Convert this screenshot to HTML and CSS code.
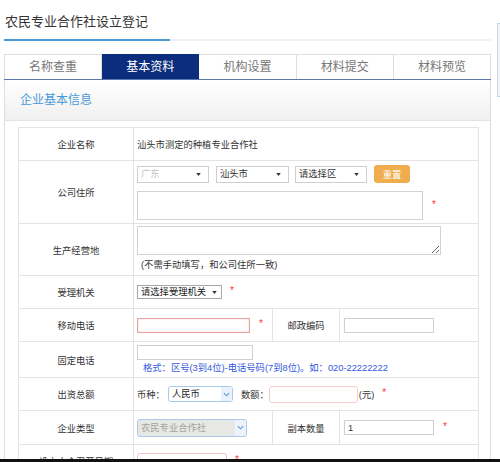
FILE: index.html
```html
<!DOCTYPE html>
<html lang="zh-CN">
<head>
<meta charset="utf-8">
<title>农民专业合作社设立登记</title>
<link rel="stylesheet" href="styles.css">
</head>
<body>
<div class="page">
  <div class="title"><span class="title-text">农民专业合作社设立登记</span></div>
  <ul class="tabs">
    <li class="tab">名称查重</li>
    <li class="tab active">基本资料</li>
    <li class="tab">机构设置</li>
    <li class="tab">材料提交</li>
    <li class="tab">材料预览</li>
  </ul>
  <div class="panel">
    <div class="panel-head">企业基本信息</div>
    <div class="panel-body">
      <table class="form">
        <colgroup><col class="c1"><col class="c2"><col class="c3"><col class="c4"></colgroup>
        <tr class="r1">
          <th>企业名称</th>
          <td colspan="3">汕头市测定的种植专业合作社</td>
        </tr>
        <tr class="r2">
          <th>公司住所</th>
          <td colspan="3">
            <div class="addr">
              <div class="line">
                <span class="sel w72 muted"><select disabled><option>广东</option></select><svg class="tri" viewBox="0 0 6 4"><path d="M0 0h6L3 4z"/></svg></span>
                <span class="sel w73 ml7"><select><option>汕头市</option></select><svg class="tri" viewBox="0 0 6 4"><path d="M0 0h6L3 4z"/></svg></span>
                <span class="sel w72 ml6"><select><option>请选择区</option></select><svg class="tri" viewBox="0 0 6 4"><path d="M0 0h6L3 4z"/></svg></span>
                <button class="btn-reset" type="button">重置</button>
              </div>
              <div class="line">
                <textarea class="ta ta-addr"></textarea>
                <span class="star ml9">*</span>
              </div>
            </div>
          </td>
        </tr>
        <tr class="r3">
          <th>生产经营地</th>
          <td colspan="3">
            <div class="prod">
              <textarea class="ta ta-prod"></textarea>
              <span class="hint">(不需手动填写，和公司住所一致)</span>
            </div>
          </td>
        </tr>
        <tr class="r4">
          <th>受理机关</th>
          <td colspan="3">
            <div class="line">
              <span class="sel sel-org"><select><option>请选择受理机关</option></select><svg class="tri" viewBox="0 0 6 4"><path d="M0 0h6L3 4z"/></svg></span>
              <span class="star ml8">*</span>
            </div>
          </td>
        </tr>
        <tr class="r5">
          <th>移动电话</th>
          <td>
            <div class="line">
              <input class="inp inp-phone req" type="text">
              <span class="star ml9">*</span>
            </div>
          </td>
          <th>邮政编码</th>
          <td class="pl4"><input class="inp inp-zip" type="text"></td>
        </tr>
        <tr class="r6">
          <th>固定电话</th>
          <td colspan="3">
            <div class="tel">
              <input class="inp inp-tel" type="text">
              <span class="fmt">格式：区号(3到4位)-电话号码(7到8位)。如：020-22222222</span>
            </div>
          </td>
        </tr>
        <tr class="r7">
          <th>出资总额</th>
          <td colspan="3">
            <div class="line">
              <span>币种：</span>
              <span class="combo w65 ml3"><select><option>人民币</option></select><span class="chev"><svg viewBox="0 0 8 5"><path d="M1 1l3 3 3-3"/></svg></span></span>
              <span class="ml8">数额：</span>
              <input class="inp inp-amt ml3" type="text">
              <span class="unit">(元)</span>
              <span class="star ml8">*</span>
            </div>
          </td>
        </tr>
        <tr class="r8">
          <th>企业类型</th>
          <td>
            <span class="combo combo-gray w110"><select disabled><option>农民专业合作社</option></select><span class="chev"><svg viewBox="0 0 8 5"><path d="M1 1l3 3 3-3"/></svg></span></span>
          </td>
          <th>副本数量</th>
          <td class="pl4">
            <div class="line">
              <input class="inp inp-zip" type="text" value="1">
              <span class="star ml9">*</span>
            </div>
          </td>
        </tr>
        <tr class="r9">
          <th>设立大会召开日期</th>
          <td colspan="3">
            <div class="line">
              <input class="inp inp-date" type="text">
              <span class="star ml8">*</span>
            </div>
          </td>
        </tr>
      </table>
    </div>
  </div>
</div>
<div class="side-thumb"></div>
<div class="bottom-bar"></div>
</body>
</html>
```

FILE: styles.css
```css
html, body {
  margin: 0;
  padding: 0;
  overflow: hidden;
  background: #fff;
}
body {
  font-family: "Liberation Sans", "Noto Sans CJK SC", sans-serif;
  color: #333;
}
.page {
  margin-left: 4px;
  width: 487px;
}
.title {
  display: flex;
  border-bottom: 2px solid #eef3f9;
}
.title-text {
  display: block;
  width: 165px;
  height: 34px;
  padding: 5px 0 0 1px;
  line-height: 34px;
  font-size: 13px;
  color: #333;
  border-bottom: 2px solid #4b9ad9;
  margin-bottom: -2px;
  white-space: nowrap;
}
.tabs {
  list-style: none;
  margin: 13px 0 0;
  padding: 0;
  display: flex;
  border-bottom: 1px solid #5a78ad;
}
.tab {
  flex: 1;
  height: 25px;
  box-sizing: border-box;
  border-top: 1px solid #dedede;
  border-right: 1px solid #dedede;
  text-align: center;
  line-height: 24px;
  font-size: 12px;
  color: #777;
}
.tab:first-child {
  border-left: 1px solid #dedede;
}
.tab.active {
  background: #0b2d7b;
  border-color: #0b2d7b;
  color: #fff;
}
.panel {
  border: 1px solid #dedede;
  border-top: none;
}
.panel-head {
  height: 40px;
  line-height: 40px;
  padding-left: 15px;
  font-size: 12px;
  color: #4a9ad8;
  background: linear-gradient(#ffffff, #f0f0f0);
  border-bottom: 1px solid #e3e3e3;
}
.panel-body {
  padding: 6px 12px 20px 13px;
}
.form {
  border-collapse: collapse;
  table-layout: fixed;
  width: 460px;
  border: 1px solid #dcdcdc;
  font-size: 9.3px;
}
.c1 { width: 115px; }
.c2 { width: 139px; }
.c3 { width: 67px; }
.c4 { width: 139px; }
.form th,
.form td {
  border: 1px solid #e4e4e4;
  padding: 0;
}
.form th {
  font-weight: normal;
  text-align: center;
  color: #333;
}
.form td {
  padding-left: 3px;
  text-align: left;
}
.form td.pl4 { padding-left: 4px; }
.r1 > * { height: 32px; }
.r2 > * { height: 62px; }
.r3 > * { height: 51px; }
.r4 > * { height: 32px; }
.r5 > * { height: 32px; }
.r6 > * { height: 35px; }
.r7 > * { height: 32px; }
.r8 > * { height: 33px; }
.r9 > * { height: 32px; }

.line {
  display: flex;
  align-items: center;
}
.addr {
  display: flex;
  flex-direction: column;
  gap: 8px;
  padding: 4px 0 3px;
}
.ml3 { margin-left: 3px; }
.ml6 { margin-left: 6px; }
.ml7 { margin-left: 7px; }
.ml8 { margin-left: 8px; }
.ml9 { margin-left: 9px; }

.sel {
  display: inline-flex;
  align-items: center;
  box-sizing: border-box;
  height: 17px;
  border: 1px solid #cfcfcf;
  background: #fff;
}
.sel select {
  appearance: none;
  -webkit-appearance: none;
  border: 0;
  outline: none;
  background: transparent;
  font: inherit;
  color: #333;
  flex: 1;
  min-width: 0;
  height: 100%;
  padding: 0 0 0 3px;
  margin: 0;
}
.sel.muted select { color: #aaa; }
.tri {
  flex: none;
  width: 5px;
  height: 3px;
  margin-right: 7px;
  fill: #333;
}
.w72 { width: 72px; }
.w73 { width: 73px; }
.w65 { width: 65px; }
.w110 { width: 110px; }
.sel-org {
  width: 85px;
  height: 14px;
  border-color: #a8a8a8;
}
.sel-org select { padding-left: 3px; color: #222; }
.sel-org .tri { margin-right: 4px; }

.btn-reset {
  margin-left: 7px;
  width: 36px;
  height: 18px;
  border: 0;
  border-radius: 3px;
  background: #f0ad4e;
  color: #fff;
  font: inherit;
  font-size: 9.3px;
  padding: 0;
}
.ta {
  box-sizing: border-box;
  border: 1px solid #d2d2d2;
  margin: 0;
  padding: 2px;
  font: inherit;
  display: block;
}
.ta-addr {
  width: 286px;
  height: 29px;
  resize: none;
}
.ta-prod {
  width: 304px;
  height: 29px;
}
.prod {
  display: flex;
  flex-direction: column;
  align-items: flex-start;
  gap: 4px;
  padding-bottom: 3px;
}
.hint {
  padding-left: 4px;
  color: #333;
  line-height: 12px;
}
.star {
  color: #f33;
  font-size: 10px;
  line-height: 10px;
  position: relative;
  top: -1px;
}
.inp {
  box-sizing: border-box;
  height: 15px;
  border: 1px solid #cfcfcf;
  margin: 0;
  padding: 0 3px;
  font: inherit;
  color: #333;
  outline: none;
  background: #fff;
}
.inp.req {
  border-color: #e4a2a2;
  box-shadow: inset 0 0 2px #f4c8c8;
}
.inp-phone { width: 113px; }
.inp-zip { width: 90px; height: 15px; }
.inp-tel { width: 116px; }
.tel {
  display: flex;
  flex-direction: column;
  align-items: flex-start;
  gap: 2px;
}
.fmt {
  padding-left: 6px;
  color: #3458e0;
  line-height: 12px;
  white-space: nowrap;
}
.combo {
  display: inline-flex;
  align-items: stretch;
  box-sizing: border-box;
  height: 16px;
  border: 1px solid #a9cbea;
  border-radius: 3px;
  background: #fff;
  overflow: hidden;
}
.combo select {
  appearance: none;
  -webkit-appearance: none;
  border: 0;
  outline: none;
  background: transparent;
  font: inherit;
  color: #222;
  flex: 1;
  min-width: 0;
  padding: 0 0 0 3px;
  margin: 0;
}
.chev {
  flex: none;
  width: 11px;
  display: flex;
  align-items: center;
  justify-content: center;
  background: #e9f2fb;
}
.chev svg {
  width: 7px;
  height: 5px;
  fill: none;
  stroke: #5b9bd5;
  stroke-width: 1.3;
}
.combo-gray {
  height: 18px;
  background: #e7e7e3;
}
.combo-gray select { color: #888; }
.combo-gray .chev { background: #edf3fa; }
.inp-amt {
  width: 89px;
  height: 17px;
  border-color: #f5cccc;
  border-radius: 3px;
}
.unit {
  margin-left: 1px;
}
.inp-date {
  width: 90px;
  height: 17px;
  border-color: #f2c4c4;
  border-radius: 3px;
}
.side-thumb {
  position: fixed;
  left: 497px;
  top: 23px;
  width: 6px;
  height: 74px;
  box-sizing: border-box;
  border: 1px solid #c8d5e4;
  background: #f2f5f9;
}
.bottom-bar {
  position: fixed;
  left: 0;
  right: 0;
  bottom: 0;
  height: 3px;
  background: #111;
}
```
